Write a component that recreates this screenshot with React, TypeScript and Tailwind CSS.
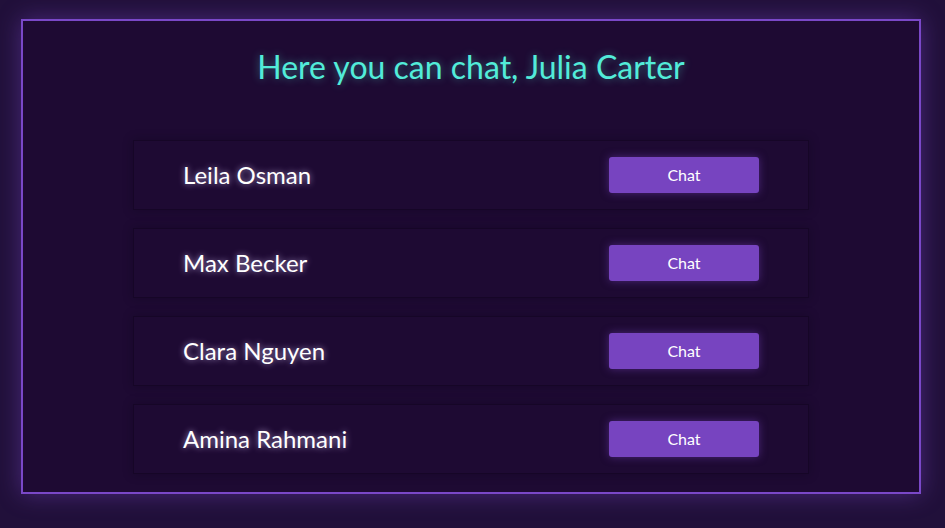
import React from 'react';

const contacts = ['Leila Osman', 'Max Becker', 'Clara Nguyen', 'Amina Rahmani'];

export default function App() {
  return (
    <div
      className="w-[945px] h-[528px] bg-[#21103a] pt-[19px] pl-[21px]"
      style={{ fontFamily: 'Lato, "Open Sans", sans-serif' }}
    >
      <div className="w-[900px] h-[475px] border-2 border-[#7a48c8] bg-[#1e0a33] shadow-[0_0_22px_rgba(122,72,200,0.45)] flex flex-col items-center">
        <h1 className="mt-[25px] text-[32px] leading-[42px] text-[#52ecd9] [text-shadow:0_0_8px_rgba(82,236,217,0.45)]">
          Here you can chat, Julia Carter
        </h1>
        <div className="mt-[52px] flex flex-col gap-[18px]">
          {contacts.map((name) => (
            <div
              key={name}
              className="w-[676px] h-[70px] border border-[#160627] shadow-[0_0_10px_rgba(10,2,20,0.3)] flex items-center justify-between pl-[49px] pr-[49px]"
            >
              <span className="text-[24px] text-white [text-shadow:0_0_6px_rgba(220,200,255,0.7)]">
                {name}
              </span>
              <button className="w-[150px] h-[36px] rounded-[3px] bg-[#7744c0] text-white text-[16px] shadow-[0_0_8px_rgba(119,68,192,0.5)]">
                Chat
              </button>
            </div>
          ))}
        </div>
      </div>
    </div>
  );
}
